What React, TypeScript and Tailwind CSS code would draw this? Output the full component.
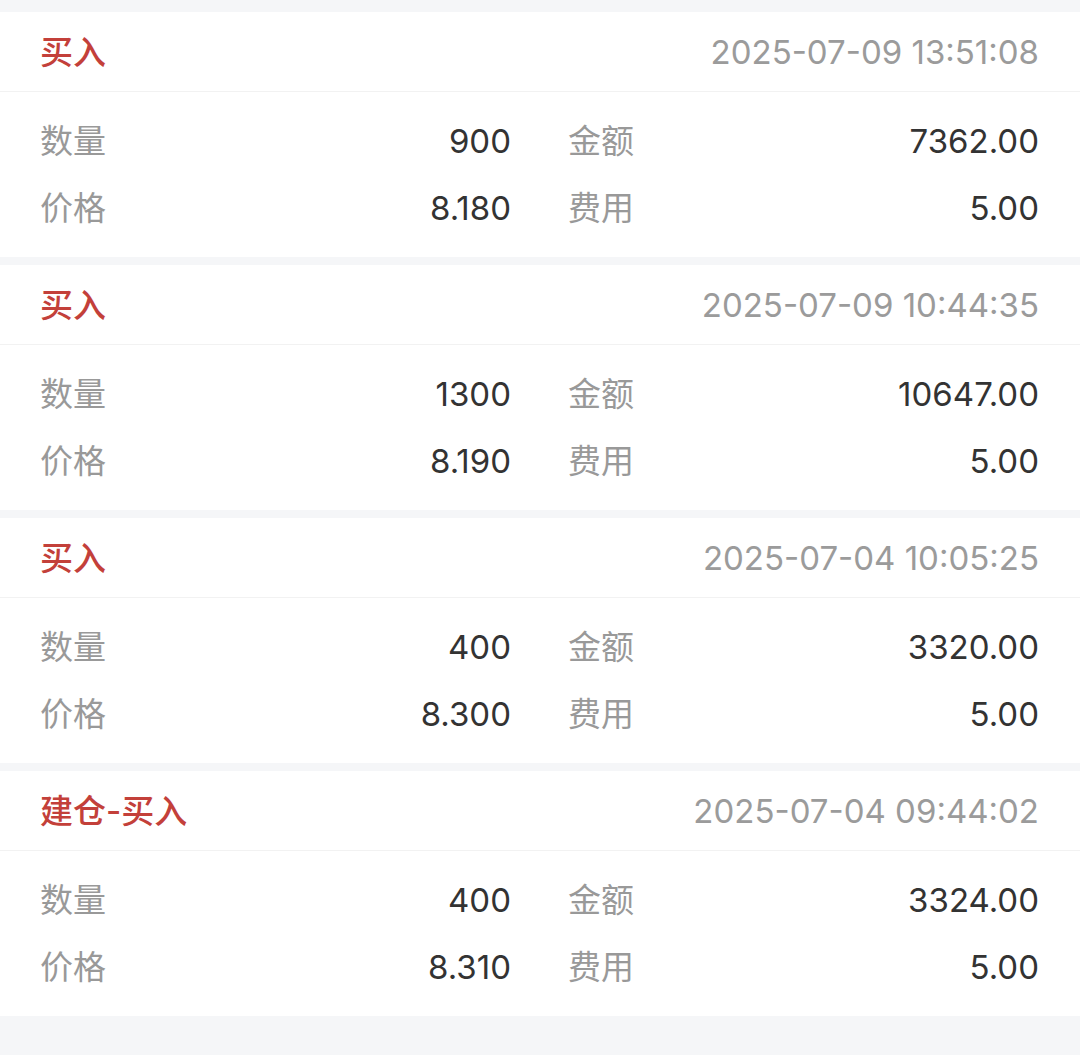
import React from "react";

type Rec = { type: string; time: string; qty: string; amount: string; price: string; fee: string };

const records: Rec[] = [
  { type: "买入", time: "2025-07-09 13:51:08", qty: "900", amount: "7362.00", price: "8.180", fee: "5.00" },
  { type: "买入", time: "2025-07-09 10:44:35", qty: "1300", amount: "10647.00", price: "8.190", fee: "5.00" },
  { type: "买入", time: "2025-07-04 10:05:25", qty: "400", amount: "3320.00", price: "8.300", fee: "5.00" },
  { type: "建仓-买入", time: "2025-07-04 09:44:02", qty: "400", amount: "3324.00", price: "8.310", fee: "5.00" },
];

function Cell({ label, value }: { label: string; value: string }) {
  return (
    <div className="flex items-center justify-between h-[67px]">
      <span className="text-[#999999]">{label}</span>
      <span className="text-[#333333]">{value}</span>
    </div>
  );
}

export default function App() {
  return (
    <div
      className="min-h-[1055px] bg-[#f5f6f8] pt-[12px] flex flex-col gap-[8px] text-[33px] leading-none"
      style={{ fontFamily: 'Inter, "Noto Sans CJK SC", sans-serif' }}
    >
      {records.map((r, i) => (
        <div key={i} className="bg-white">
          <div className="h-[80px] pt-[1px] flex items-center justify-between pl-[40px] pr-[41px] border-b border-[#f2f2f2]">
            <span className="text-[#c3403a] font-medium">{r.type}</span>
            <span className="text-[#9b9b9b]">{r.time}</span>
          </div>
          <div className="grid grid-cols-2 gap-x-[57px] pl-[40px] pr-[41px] pt-[16px] pb-[15px]">
            <Cell label="数量" value={r.qty} />
            <Cell label="金额" value={r.amount} />
            <Cell label="价格" value={r.price} />
            <Cell label="费用" value={r.fee} />
          </div>
        </div>
      ))}
    </div>
  );
}
